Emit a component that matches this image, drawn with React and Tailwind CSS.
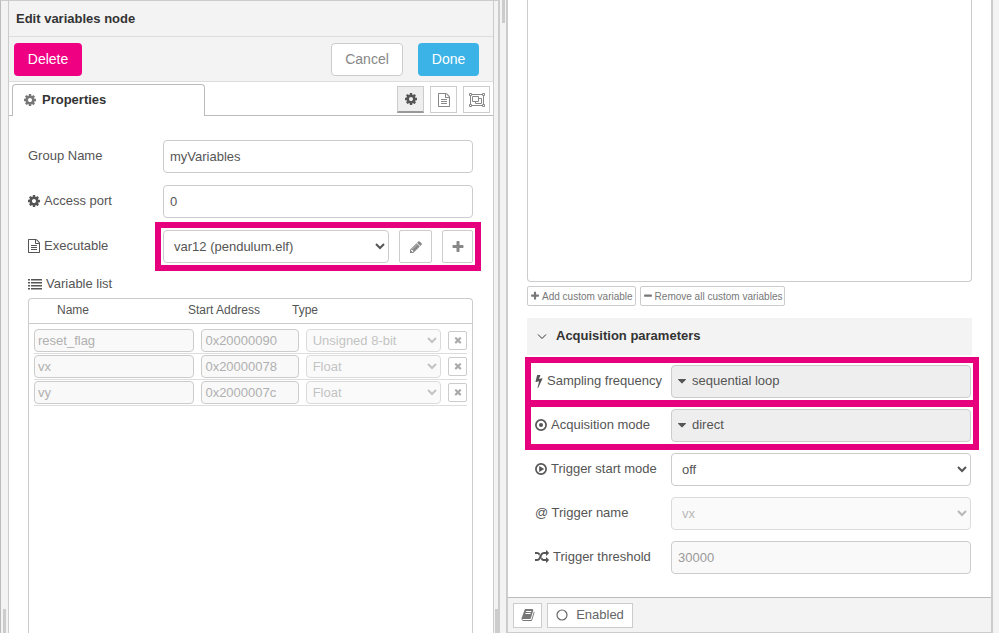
import React, { useState } from 'react';
import clsx from 'clsx';

const ICONS = {
  cog: 'M1152 896q0-106-75-181t-181-75-181 75-75 181 75 181 181 75 181-75 75-181zm512-109v222q0 12-8 23t-20 13l-185 28q-19 54-39 91 35 50 107 138 10 12 10 25t-9 23q-27 37-99 108t-94 71q-12 0-26-9l-138-108q-44 23-91 38-16 136-29 186-7 28-36 28h-222q-14 0-24.5-8.5t-11.500-21.5l-28-184q-49-16-90-37l-141 107q-10 9-25 9-14 0-25-11-126-114-165-168-7-10-7-23 0-12 8-23 15-21 51-66.5t54-70.5q-27-50-41-99l-183-27q-13-2-21-12.5t-8-23.5v-222q0-12 8-23t19-13l186-28q14-46 39-92-40-57-107-138-10-12-10-24 0-10 9-23 26-36 98.500-107.5t94.500-71.5q13 0 26 10l138 107q44-23 91-38 16-136 29-186 7-28 36-28h222q14 0 24.500 8.500t11.500 21.500l28 184q49 16 90 37l142-107q9-9 24-9 13 0 25 10 129 119 165 170 7 8 7 22 0 12-8 23-15 21-51 66.500t-54 70.500q26 50 41 98l183 28q13 2 21 12.500t8 23.500z',
  file: 'M1596 380q28 28 48 76t20 88v1152q0 40-28 68t-68 28h-1344q-40 0-68-28t-28-68v-1600q0-40 28-68t68-28h896q40 0 88 20t76 48zm-444-244v376h376q-10-29-22-41l-313-313q-12-12-41-22zm384 1528v-1024h-416q-40 0-68-28t-28-68v-416h-768v1536h1280zm-1024-864q0-14 9-23t23-9h704q14 0 23 9t9 23v64q0 14-9 23t-23 9h-704q-14 0-23-9t-9-23v-64zm736 224q14 0 23 9t9 23v64q0 14-9 23t-23 9h-704q-14 0-23-9t-9-23v-64q0-14 9-23t23-9h704zm0 256q14 0 23 9t9 23v64q0 14-9 23t-23 9h-704q-14 0-23-9t-9-23v-64q0-14 9-23t23-9h704z',
  list: 'M0 256h256v192H0zM384 256h1408v192H384zM0 640h256v192H0zM384 640h1408v192H384zM0 1024h256v192H0zM384 1024h1408v192H384zM0 1408h256v192H0zM384 1408h1408v192H384z',
  pencil: 'M491 1536l91-91-235-235-91 91v107h128v128h107zm523-928q0-22-22-22-10 0-17 7l-542 542q-7 7-7 17 0 22 22 22 10 0 17-7l542-542q7-7 7-17zm-54-192l416 416-832 832h-416v-416zm683 96q0 53-37 90l-166 166-416-416 166-165q36-38 90-38 53 0 91 38l235 234q37 39 37 91z',
  plus: 'M1600 736v192q0 40-28 68t-68 28h-416v416q0 40-28 68t-68 28h-192q-40 0-68-28t-28-68v-416h-416q-40 0-68-28t-28-68v-192q0-40 28-68t68-28h416v-416q0-40 28-68t68-28h192q40 0 68 28t28 68v416h416q40 0 68 28t28 68z',
  minus: 'M1600 736v192q0 40-28 68t-68 28h-1216q-40 0-68-28t-28-68v-192q0-40 28-68t68-28h1216q40 0 68 28t28 68z',
  remove: 'M1490 1322q0 40-28 68l-136 136q-28 28-68 28t-68-28l-294-294-294 294q-28 28-68 28t-68-28l-136-136q-28-28-28-68t28-68l294-294-294-294q-28-28-28-68t28-68l136-136q28-28 68-28t68 28l294 294 294-294q28-28 68-28t68 28l136 136q28 28 28 68t-28 68l-294 294 294 294q28 28 28 68z',
  bolt: 'M1333 566q18 20 7 44l-540 1157q-13 25-42 25-4 0-14-2-17-5-25.5-19t-4.5-30l197-808-406 101q-4 1-12 1-18 0-31-11-18-15-13-39l201-825q4-14 16-23t28-9h328q19 0 32 12.500t13 29.500q0 8-5 18l-171 463 396-98q8-2 12-2 19 0 34 15z',
  random: 'M666 481q-60 92-137 273-22-45-37-72.500t-40.500-63.500-51-56.500-63-35-81.500-14.500h-224q-14 0-23-9t-9-23v-192q0-14 9-23t23-9h224q250 0 410 225zm1126 799q0 14-9 23l-320 320q-9 9-23 9-13 0-22.500-9.500t-9.500-22.500v-192q-32 0-85 .5t-81 1-73-1-71-5-64-10.500-63-18.500-58-28.500-59-40-55-53.500-56-69.500q59-93 136-273 22 45 37 72.500t40.500 63.500 51 56.500 63 35 81.500 14.500h256v-192q0-14 9-23t23-9q12 0 24 10l319 319q9 9 9 23zm0-896q0 14-9 23l-320 320q-9 9-23 9-13 0-22.500-9.500t-9.500-22.500v-192h-256q-48 0-87 15t-69 45-51 61.500-45 77.500q-32 62-78 171-29 66-49.500 111t-54 105-64 100-74 83-90 68.500-106.500 42-128 16.500h-224q-14 0-23-9t-9-23v-192q0-14 9-23t23-9h224q48 0 87-15t69-45 51-61.500 45-77.500q32-62 78-171 29-66 49.500-111t54-105 64-100 74-83 90-68.500 106.500-42 128-16.500h256v-192q0-14 9-23t23-9q12 0 24 10l319 319q9 9 9 23z',
  book: 'M1703 478q40 57 18 129l-275 906q-19 64-76.500 107.500t-122.500 43.500h-923q-77 0-148.500-53.500t-99.500-131.500q-24-67-2-127 0-4 3-27t4-37q1-8-3-21.500t-3-19.500q2-11 8-21t16.500-23.500 16.500-23.500q23-38 45-91.500t30-91.500q3-10 .5-30t-.5-28q3-11 17-28t17-23q21-36 42-92t25-90q1-9-2.500-32t.5-28q4-13 22-30.500t22-22.500q19-26 42.500-84.500t27.500-96.500q1-8-3-25.500t-2-26.500q2-8 9-18t18-23 17-21q8-12 16.500-30.500t15-35 16-36 19.500-32 26.500-23.500 36-11.500 47.500 5.500l-1 3q38-9 51-9h761q74 0 114 56t18 130l-274 906q-36 119-71.500 153.500t-128.500 34.500h-869q-27 0-38 15-11 16-1 43 24 70 144 70h923q29 0 56-15.500t35-41.500l300-987q7-22 5-57 38 15 59 43zm-1064 2q-4 13 2 22.500t20 9.500h608q13 0 25.500-9.500t16.500-22.500l21-64q4-13-2-22.500t-20-9.500h-608q-13 0-25.500 9.500t-16.500 22.500zm-83 256q-4 13 2 22.500t20 9.500h608q13 0 25.500-9.500t16.500-22.500l21-64q4-13-2-22.500t-20-9.500h-608q-13 0-25.500 9.500t-16.500 22.500z',
  caret: 'M1408 704q0 26-19 45l-448 448q-19 19-45 19t-45-19l-448-448q-19-19-19-45t19-45 45-19h896q26 0 45 19t19 45z',
};

const Icon = ({ name, viewBox = '0 0 1792 1792', className = 'size-3.5' }) => (
  <svg viewBox={viewBox} fill="currentColor" aria-hidden="true" className={clsx('shrink-0', className)}>
    <path d={ICONS[name]} />
  </svg>
);

// Same drawing without the side bearings, for icons that start a label
const LabelIcon = ({ name }) => <Icon name={name} viewBox="128 0 1536 1792" className="h-3.5 w-3" />;

const DotCircleIcon = () => (
  <svg viewBox="0 0 12 12" aria-hidden="true" className="size-3 shrink-0">
    <circle cx="6" cy="6" r="5.100" fill="none" stroke="currentColor" strokeWidth="1.700" />
    <circle cx="6" cy="6" r="2" fill="currentColor" />
  </svg>
);

const PlayCircleIcon = () => (
  <svg viewBox="0 0 12 12" aria-hidden="true" className="size-3 shrink-0">
    <circle cx="6" cy="6" r="5.100" fill="none" stroke="currentColor" strokeWidth="1.700" />
    <path d="M4.200 3v6L9.200 6z" fill="currentColor" />
  </svg>
);

const ObjectGroupIcon = () => (
  <svg viewBox="0 0 16 14" fill="none" stroke="currentColor" aria-hidden="true" className="h-3.5 w-4 shrink-0">
    <path d="M2.500 1.500h11M2.500 12.500h11M1.500 2.500v9M14.500 2.500v9" />
    <path d="M.5.5h2v2h-2zM13.500.5h2v2h-2zM.5 11.500h2v2h-2zM13.500 11.500h2v2h-2z" />
    <path d="M3.500 3.500h6v5h-6zM9.500 5.500h3v5h-6v-2" />
  </svg>
);

const variables = [
  { name: 'reset_flag', address: '0x20000090', type: 'Unsigned 8-bit' },
  { name: 'vx', address: '0x20000078', type: 'Float' },
  { name: 'vy', address: '0x2000007c', type: 'Float' },
];

const field = 'h-[33px] w-full min-w-0 rounded border border-[#ccc] bg-white px-1.5 text-[13px] text-[#555]';
const smallInput = 'block h-[23px] w-full min-w-0 rounded border border-[#ccc] bg-[#f9f9f9] px-[3px] text-[13px] text-[#b0b0b0]';
const smallSelect = 'block h-[23px] w-full min-w-0 rounded border border-[#ccc] bg-[#f9f9f9] px-0.5 text-[13px] text-[#aaa] opacity-70';
const tool = 'flex items-center justify-center border border-[#ccc] bg-white';
const dropButton = 'flex h-[33px] items-center gap-[3px] rounded border border-[#ccc] bg-[#eee] px-[3px] pb-0.5 text-[13px]';

// Frame drawn round the fields that are being pointed out
const Highlight = ({ className }) => (
  <div className={clsx('pointer-events-none absolute -inset-y-2 border-6 border-[#e6007e]', className)} />
);

const Row = ({ id, label, icon, children, className = 'grid-cols-[135px_1fr]' }) => (
  <div className={clsx('relative grid items-center', className)}>
    <label htmlFor={id} className="flex items-center gap-1 whitespace-nowrap pb-0.5">
      {icon}
      {label}
    </label>
    {children}
  </div>
);

const VariableTable = () => (
  <table className="block flex-1 rounded-t border border-b-0 border-[#ccc]">
    <thead className="block border-b border-[#ccc] text-xs">
      <tr className="grid h-6 grid-cols-[131px_104px_1fr] items-center pb-0.5 pl-7 text-left">
        <th className="font-normal">Name</th>
        <th className="font-normal">Start Address</th>
        <th className="font-normal">Type</th>
      </tr>
    </thead>
    <tbody className="block px-[5px] pt-[5px]">
      {variables.map((v) => (
        <tr
          key={v.name}
          className="mb-px grid grid-cols-[160fr_97fr_135fr_19px] items-center gap-[7px] border-b border-[#ddd] pb-px"
        >
          <td><input aria-label="Name" disabled defaultValue={v.name} className={smallInput} /></td>
          <td><input aria-label="Start address" disabled defaultValue={v.address} className={smallInput} /></td>
          <td>
            <select aria-label="Type" disabled defaultValue={v.type} className={smallSelect}>
              <option>{v.type}</option>
            </select>
          </td>
          <td>
            <button type="button" aria-label="Remove" className={clsx(tool, 'size-[19px] rounded-xs text-[#aaa]')}>
              <Icon name="remove" className="size-2.5" />
            </button>
          </td>
        </tr>
      ))}
    </tbody>
  </table>
);

const EditPanel = () => {
  const [groupName, setGroupName] = useState('myVariables');
  const [port, setPort] = useState('0');

  return (
    <section className="relative flex border-t border-r-2 border-l border-t-[#ccc] border-r-[#ccc] border-l-[#bbb] bg-[#f3f3f3] pr-1 pl-[7px]">
      <div className="absolute bottom-0 left-0.5 h-6 w-[3px] bg-[#ccc]" />
      <div className="absolute right-0 bottom-0 h-6 w-[3px] bg-[#ccc]" />
      <div className="flex min-w-0 flex-1 flex-col border-x border-[#ccc] bg-white">
        <div className="flex h-9 items-center border-b border-[#ddd] bg-[#f3f3f3] px-[7px] text-[13px] font-bold text-[#333]">
          Edit variables node
        </div>
        <div className="flex h-[45px] items-center border-b border-[#ddd] bg-[#f3f3f3] pr-3.5 pl-[5px] text-sm">
          <button type="button" className="h-[33px] w-[68px] rounded bg-[#ef0083] text-white">Delete</button>
          <button type="button" className="ml-auto h-[33px] w-18 rounded border border-[#ccc] bg-white text-[#888]">Cancel</button>
          <button type="button" className="ml-[15px] h-[33px] w-[61px] rounded bg-[#3bb3e6] text-white">Done</button>
        </div>

        {/* Tabs */}
        <div className="flex h-[34px] items-end border-b border-[#bbb] pr-[3px] pl-[3px]">
          <button
            type="button"
            className="-mb-px flex h-8 w-[193px] items-center gap-1.5 rounded-t border border-b-0 border-[#bbb] bg-white pb-0.5 pl-[11px] text-[13px] font-bold text-[#333]"
          >
            <span className="text-[#777]">
              <LabelIcon name="cog" />
            </span>
            Properties
          </button>
          <div className="mb-0.5 ml-auto flex gap-1.5">
            <button type="button" aria-label="Properties" className="flex size-[27px] items-center justify-center border border-b-2 border-[#ccc] border-b-[#999] bg-[#eee] text-[#555]">
              <LabelIcon name="cog" />
            </button>
            <button type="button" aria-label="Description" className={clsx(tool, 'size-[27px] text-[#888]')}>
              <LabelIcon name="file" />
            </button>
            <button type="button" aria-label="Appearance" className={clsx(tool, 'size-[27px] text-[#888]')}>
              <ObjectGroupIcon />
            </button>
          </div>
        </div>

        <form className="flex flex-1 flex-col pt-6 pr-5 pl-[19px]">
          <div className="flex flex-col gap-3">
            <Row id="group" label="Group Name">
              <input id="group" value={groupName} onChange={(e) => setGroupName(e.target.value)} className={field} />
            </Row>
            <Row id="port" label="Access port" icon={<LabelIcon name="cog" />}>
              <input id="port" value={port} onChange={(e) => setPort(e.target.value)} className={field} />
            </Row>
            <Row id="executable" label="Executable" icon={<LabelIcon name="file" />}>
              <div className="relative flex gap-2.5">
                <select id="executable" className={field}>
                  <option>var12 (pendulum.elf)</option>
                </select>
                <button type="button" aria-label="Edit" className={clsx(tool, 'h-[33px] w-[33px] shrink-0 rounded-xs text-[#888]')}>
                  <LabelIcon name="pencil" />
                </button>
                <button type="button" aria-label="Add" className={clsx(tool, 'h-[33px] w-[31px] shrink-0 rounded-xs text-[#888]')}>
                  <LabelIcon name="plus" />
                </button>
                <Highlight className="-inset-x-2" />
              </div>
            </Row>
          </div>
          <div className="flex items-center gap-1 pt-[11px] pb-1">
            <Icon name="list" />
            Variable list
          </div>
          <VariableTable />
        </form>
      </div>
    </section>
  );
};

const columns = 'grid-cols-[136px_1fr]';

const AcquisitionPanel = () => (
  <section className="relative flex bg-[#f3f3f3] pr-1.5 pl-1.5">
    <div className="absolute top-0 left-0.5 h-[23px] w-[3px] bg-[#ccc]" />
    <div className="flex min-w-0 flex-1 flex-col border-r-2 border-b border-l-2 border-[#ccc] bg-white">
      <div className="flex flex-1 flex-col pr-[19px] pb-[23px] pl-[19px]">
        <div className="flex-1 rounded-b border border-t-0 border-[#ccc]" />
        <div className="mt-1 flex gap-1 text-[10px] text-[#777]">
          <button type="button" className={clsx(tool, 'h-5 gap-0.5 rounded-xs px-0.5')}>
            <Icon name="plus" className="size-2.5" />
            Add custom variable
          </button>
          <button type="button" className={clsx(tool, 'h-5 gap-0.5 rounded-xs px-0.5')}>
            <Icon name="minus" className="size-2.5" />
            Remove all custom variables
          </button>
        </div>
        <button
          type="button"
          className="mt-3 flex h-[37px] items-center gap-[7px] bg-[#f3f3f3] pb-0.5 pl-2 text-[13px] font-bold text-[#333]"
        >
          <svg viewBox="0 0 14 14" fill="none" stroke="currentColor" aria-hidden="true" className="size-3.5">
            <path d="M3 5.500 7 9.500l4-4" />
          </svg>
          Acquisition parameters
        </button>
        <form className="flex flex-col gap-[11px] pt-2.5 pr-px pl-2">
          <Row
            id="frequency"
            label="Sampling frequency"
            icon={<Icon name="bolt" viewBox="384 0 1024 1792" className="h-3.5 w-2" />}
            className={columns}
          >
            <button id="frequency" type="button" className={dropButton}>
              <Icon name="caret" />
              sequential loop
            </button>
            <Highlight className="-right-2 -left-2.5" />
          </Row>
          <Row id="mode" label="Acquisition mode" icon={<DotCircleIcon />} className={columns}>
            <button id="mode" type="button" className={dropButton}>
              <Icon name="caret" />
              direct
            </button>
            <Highlight className="-right-2 -left-2.5" />
          </Row>
          <Row id="start" label="Trigger start mode" icon={<PlayCircleIcon />} className={columns}>
            <select id="start" className={field}>
              <option>off</option>
            </select>
          </Row>
          <Row id="trigger" label="@ Trigger name" className={columns}>
            <select id="trigger" disabled className="h-[33px] w-full rounded border border-[#ccc] bg-[#f9f9f9] px-1.5 text-[13px] text-[#999] opacity-70">
              <option>vx</option>
            </select>
          </Row>
          <Row id="threshold" label="Trigger threshold" icon={<Icon name="random" />} className={columns}>
            <input id="threshold" disabled defaultValue="30000" className="h-[33px] w-full rounded border border-[#ccc] bg-[#f9f9f9] px-1.5 text-[13px] text-[#999]" />
          </Row>
        </form>
      </div>
      <div className="flex h-[35px] items-center gap-[5px] border-t border-[#bbb] bg-[#f3f3f3] px-[5px]">
        <button type="button" aria-label="Help" className={clsx(tool, 'h-[25px] w-[29px] text-[#777]')}>
          <Icon name="book" />
        </button>
        <button type="button" className={clsx(tool, 'h-[25px] w-[86px] gap-2 text-[13px] text-[#666]')}>
          <svg viewBox="0 0 12 12" fill="none" stroke="currentColor" aria-hidden="true" className="size-3">
            <circle cx="6" cy="6" r="5" strokeWidth="1.200" />
          </svg>
          Enabled
        </button>
      </div>
    </div>
  </section>
);

export default function App() {
  return (
    <main className="grid min-h-screen grid-cols-[500fr_499fr] bg-white font-['Liberation_Sans',Arial,sans-serif] text-[13px] text-[#555]">
      <EditPanel />
      <AcquisitionPanel />
    </main>
  );
}
